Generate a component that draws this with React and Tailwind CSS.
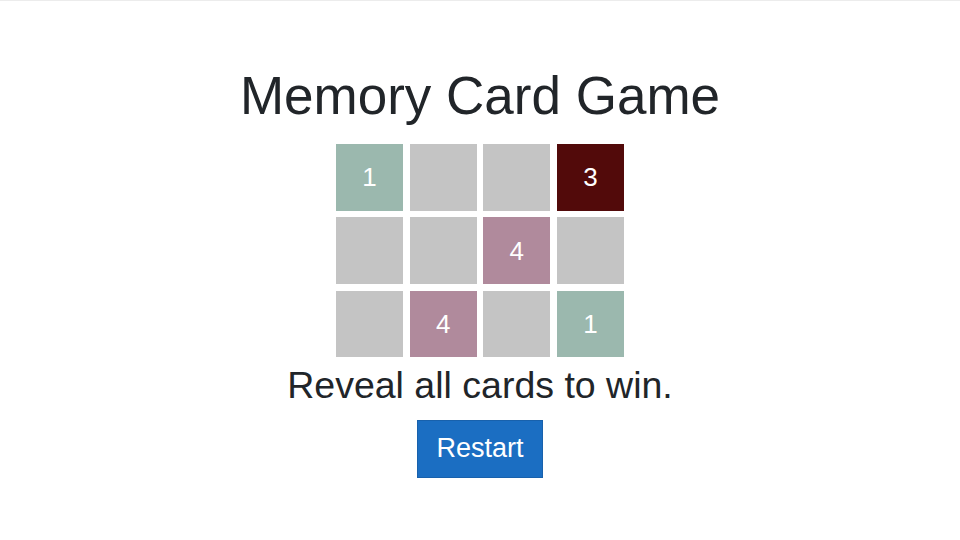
import React from "react"

const cards = [
  { value: 1, color: "bg-[#9bb8ae]" },
  { value: null, color: "bg-[#c4c4c4]" },
  { value: null, color: "bg-[#c4c4c4]" },
  { value: 3, color: "bg-[#520a0a]" },
  { value: null, color: "bg-[#c4c4c4]" },
  { value: null, color: "bg-[#c4c4c4]" },
  { value: 4, color: "bg-[#b08a9c]" },
  { value: null, color: "bg-[#c4c4c4]" },
  { value: null, color: "bg-[#c4c4c4]" },
  { value: 4, color: "bg-[#b08a9c]" },
  { value: null, color: "bg-[#c4c4c4]" },
  { value: 1, color: "bg-[#9bb8ae]" },
]

export default function App() {
  return (
    <div
      className="min-h-[540px] w-full bg-white border-t border-[#ececec] flex flex-col items-center text-[#212529]"
      style={{ fontFamily: '"Liberation Sans", Arial, sans-serif' }}
    >
      <h1 className="mt-[68px] text-[53px] leading-none font-normal">Memory Card Game</h1>

      <div className="mt-[22px] grid grid-cols-4 w-[288px] gap-[6.67px]">
        {cards.map((card, i) => (
          <div
            key={i}
            className={`h-[66.67px] flex items-center justify-center text-white text-[26px] leading-none ${card.color}`}
          >
            {card.value}
          </div>
        ))}
      </div>

      <p className="mt-[10px] text-[37.5px] leading-none">Reveal all cards to win.</p>

      <button className="mt-[15px] h-[58px] px-[18px] bg-[#1b6ec2] border border-[#1861ac] text-white text-[27px] leading-none">
        Restart
      </button>
    </div>
  )
}
